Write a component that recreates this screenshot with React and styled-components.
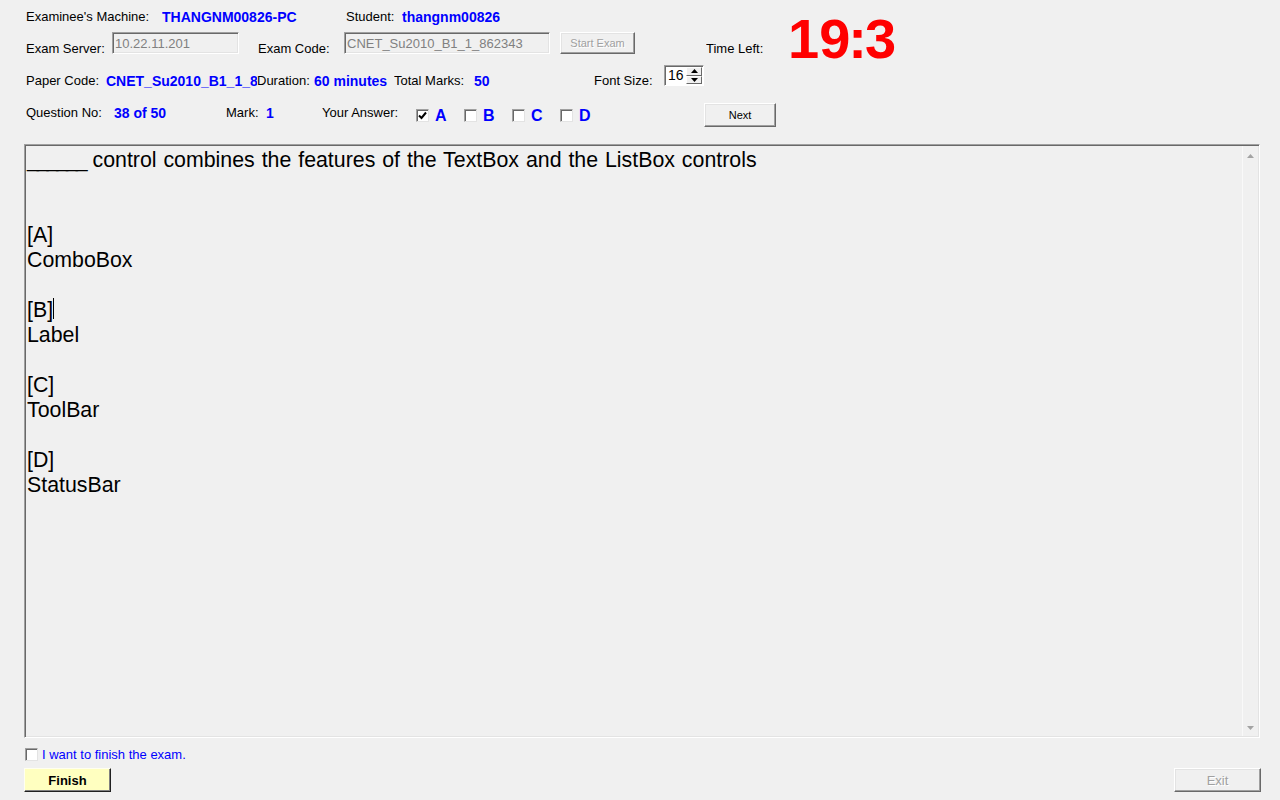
import React from "react";
import styled, { createGlobalStyle } from "styled-components";

const GlobalStyle = createGlobalStyle`
  html, body {
    margin: 0;
    padding: 0;
    background: #f0f0f0;
  }
  body {
    font-family: "Liberation Sans", Arial, sans-serif;
  }
`;

const Window = styled.div`
  width: 1280px;
  height: 800px;
  background: #f0f0f0;
  display: flex;
  flex-direction: column;
  overflow: hidden;
  font-size: 13px;
  color: #000;
`;

const Header = styled.div`
  display: flex;
  flex-direction: column;
  height: 144px;
  flex-shrink: 0;
`;

const TopBlock = styled.div`
  display: flex;
  align-items: flex-start;
  height: 64px;
`;

const TopRows = styled.div`
  width: 790px;
  display: flex;
  flex-direction: column;
  flex-shrink: 0;
`;

const Row = styled.div`
  display: flex;
  align-items: flex-start;
  height: 32px;
  padding-left: 26px;
  flex-shrink: 0;
`;

const Label = styled.span`
  width: ${(p) => (p.$w ? `${p.$w}px` : "auto")};
  margin-left: ${(p) => p.$ml || 0}px;
  margin-top: 9px;
  line-height: 16px;
  white-space: nowrap;
  overflow: hidden;
  flex-shrink: 0;
`;

const Value = styled(Label)`
  color: #0000ff;
  font-weight: bold;
  font-size: 14px;
`;

const Timer = styled.div`
  margin: 10px 0 0 -2px;
  font-size: 56px;
  line-height: 57px;
  font-weight: bold;
  color: #ff0000;
  white-space: nowrap;
`;

const Colon = styled.span`
  margin: 0 -2px 0 -2px;
`;

const TextBox = styled.div`
  width: ${(p) => p.$w}px;
  height: 22px;
  box-sizing: border-box;
  flex-shrink: 0;
  border: 1px solid;
  border-color: #a0a0a0 #ffffff #ffffff #a0a0a0;
  box-shadow: inset 1px 1px #696969, inset -1px -1px #e3e3e3;
  color: #808080;
  padding: 3px 2px 0 2px;
  line-height: 16px;
  white-space: nowrap;
  overflow: hidden;
`;

const Button = styled.button`
  width: ${(p) => p.$w}px;
  height: ${(p) => p.$h || 22}px;
  margin-left: ${(p) => p.$ml || 0}px;
  margin-top: ${(p) => p.$mt || 0}px;
  flex-shrink: 0;
  box-sizing: border-box;
  padding: 0;
  background: ${(p) => p.$bg || "#f0f0f0"};
  border: 1px solid;
  border-color: #ffffff #696969 #696969 #ffffff;
  box-shadow: inset -1px -1px #a0a0a0, inset 1px 1px #e3e3e3;
  font-family: inherit;
  font-size: ${(p) => p.$fs || 11}px;
  font-weight: ${(p) => (p.$bold ? "bold" : "normal")};
  color: #000;

  &:disabled {
    color: #a0a0a0;
    text-shadow: 1px 1px #ffffff;
  }
`;

const FinishButton = styled(Button)`
  border-color: #fffff0 #202020 #202020 #fffff0;
  box-shadow: inset -1px -1px #808080;
`;

const SpinBox = styled.div`
  width: 40px;
  height: 21px;
  margin-top: 1px;
  box-sizing: border-box;
  display: flex;
  background: #fff;
  border: 1px solid;
  border-color: #a0a0a0 #ffffff #ffffff #a0a0a0;
  box-shadow: inset 1px 1px #696969;
  flex-shrink: 0;
`;

const SpinValue = styled.span`
  flex: 1;
  font-size: 14px;
  line-height: 18px;
  padding-left: 3px;
`;

const SpinButtons = styled.div`
  width: 16px;
  display: flex;
  flex-direction: column;
  padding: 1px 1px 1px 0;
`;

const SpinBtn = styled.div`
  flex: 1;
  display: flex;
  align-items: center;
  justify-content: center;
  background: #f0f0f0;
  border: 1px solid;
  border-color: #ffffff #696969 #696969 #ffffff;
`;

const Option = styled.label`
  width: 48px;
  height: 22px;
  margin-top: 8px;
  display: flex;
  align-items: center;
  flex-shrink: 0;
`;

const Letter = styled.span`
  margin-left: 6px;
  padding-top: 2px;
  font-size: 16px;
  font-weight: bold;
  color: #0000ff;
`;

const Box = styled.span`
  width: 13px;
  height: 13px;
  box-sizing: border-box;
  display: inline-flex;
  align-items: center;
  justify-content: center;
  background: #fff;
  border: 1px solid;
  border-color: #a0a0a0 #e3e3e3 #e3e3e3 #a0a0a0;
  box-shadow: inset 1px 1px #696969;
  flex-shrink: 0;
`;

const Panel = styled.div`
  margin: 0 20px 0 24px;
  height: 594px;
  box-sizing: border-box;
  display: flex;
  flex-shrink: 0;
  border: 1px solid;
  border-color: #a0a0a0 #ffffff #ffffff #a0a0a0;
  box-shadow: inset 1px 1px #696969, inset -1px -1px #e3e3e3;
`;

const Question = styled.div`
  flex: 1;
  padding: 3px 0 0 2px;
  font-size: 21.33px;
  line-height: 25px;
  color: #000;
`;

const Line = styled.div`
  min-height: 25px;
  white-space: pre;
  word-spacing: ${(p) => p.$ws || 0}px;
`;

const Blank = styled.span`
  letter-spacing: -2.1px;
`;

const Caret = styled.span`
  display: inline-block;
  width: 1px;
  height: 21px;
  background: #000;
  vertical-align: -2px;
`;

const ScrollBar = styled.div`
  width: 15px;
  display: flex;
  flex-direction: column;
  justify-content: space-between;
  align-items: center;
  padding: 8px 0 6px;
  border-left: 1px solid #f9f9f9;
  margin: 1px 1px 1px 0;
`;

const FinishRow = styled.div`
  margin-top: 10px;
  padding-left: 25px;
  height: 13px;
  display: flex;
  align-items: center;
`;

const FinishText = styled.span`
  margin-left: 4px;
  color: #0000ff;
  line-height: 16px;
`;

const ButtonRow = styled.div`
  margin-top: 7px;
  padding: 0 19px 0 24px;
  display: flex;
  justify-content: space-between;
`;

const Tri = ({ up, color = "#000" }) => (
  <svg width="7" height="4" viewBox="0 0 7 4">
    <polygon points={up ? "3.5,0 7,4 0,4" : "0,0 7,0 3.5,4"} fill={color} />
  </svg>
);

const CheckBox = ({ checked }) => (
  <Box>
    {checked && (
      <svg width="9" height="9" viewBox="0 0 9 9">
        <polyline points="1,4.5 3.5,7 8,1.5" fill="none" stroke="#000" strokeWidth="2" />
      </svg>
    )}
  </Box>
);

const options = [
  ["[A]", "ComboBox"],
  ["[B]", "Label"],
  ["[C]", "ToolBar"],
  ["[D]", "StatusBar"],
];

const answers = [
  { key: "A", checked: true },
  { key: "B", checked: false },
  { key: "C", checked: false },
  { key: "D", checked: false },
];

export default function App() {
  return (
    <Window>
      <GlobalStyle />
      <Header>
        <TopBlock>
          <TopRows>
            <Row>
              <Label $w={136}>Examinee's Machine:</Label>
              <Value $w={184}>THANGNM00826-PC</Value>
              <Label $w={56}>Student:</Label>
              <Value>thangnm00826</Value>
            </Row>
            <Row>
              <Label $w={86}>Exam Server:</Label>
              <TextBox $w={127}>10.22.11.201</TextBox>
              <Label $w={86} $ml={19}>Exam Code:</Label>
              <TextBox $w={206}>CNET_Su2010_B1_1_862343</TextBox>
              <Button $w={75} $ml={10} disabled>
                Start Exam
              </Button>
              <Label $ml={71}>Time Left:</Label>
            </Row>
          </TopRows>
          <Timer>
            19<Colon>:</Colon>3
          </Timer>
        </TopBlock>
        <Row>
          <Label $w={80}>Paper Code:</Label>
          <Value $w={151}>CNET_Su2010_B1_1_862343</Value>
          <Label $w={57}>Duration:</Label>
          <Value $w={80}>60 minutes</Value>
          <Label $w={80}>Total Marks:</Label>
          <Value $w={120}>50</Value>
          <Label $w={70}>Font Size:</Label>
          <SpinBox>
            <SpinValue>16</SpinValue>
            <SpinButtons>
              <SpinBtn>
                <Tri up />
              </SpinBtn>
              <SpinBtn>
                <Tri />
              </SpinBtn>
            </SpinButtons>
          </SpinBox>
        </Row>
        <Row>
          <Label $w={88}>Question No:</Label>
          <Value $w={112}>38 of 50</Value>
          <Label $w={40}>Mark:</Label>
          <Value $w={56}>1</Value>
          <Label $w={94}>Your Answer:</Label>
          {answers.map((a) => (
            <Option key={a.key}>
              <CheckBox checked={a.checked} />
              <Letter>{a.key}</Letter>
            </Option>
          ))}
          <Button $w={72} $h={24} $ml={96} $mt={7}>
            Next
          </Button>
        </Row>
      </Header>

      <Panel>
        <Question>
          <Line $ws={1}>
            <Blank>______</Blank> control combines the features of the TextBox and the ListBox controls
          </Line>
          <Line />
          <Line />
          {options.map(([tag, text], i) => (
            <React.Fragment key={tag}>
              <Line>
                {tag}
                {tag === "[B]" && <Caret />}
              </Line>
              <Line>{text}</Line>
              {i < options.length - 1 && <Line />}
            </React.Fragment>
          ))}
        </Question>
        <ScrollBar>
          <Tri up color="#a3a3a3" />
          <Tri color="#a3a3a3" />
        </ScrollBar>
      </Panel>

      <FinishRow>
        <CheckBox />
        <FinishText>I want to finish the exam.</FinishText>
      </FinishRow>
      <ButtonRow>
        <FinishButton $w={87} $h={24} $fs={13} $bold $bg="#ffffc0">
          Finish
        </FinishButton>
        <Button $w={87} $h={24} $fs={13} disabled>
          Exit
        </Button>
      </ButtonRow>
    </Window>
  );
}
